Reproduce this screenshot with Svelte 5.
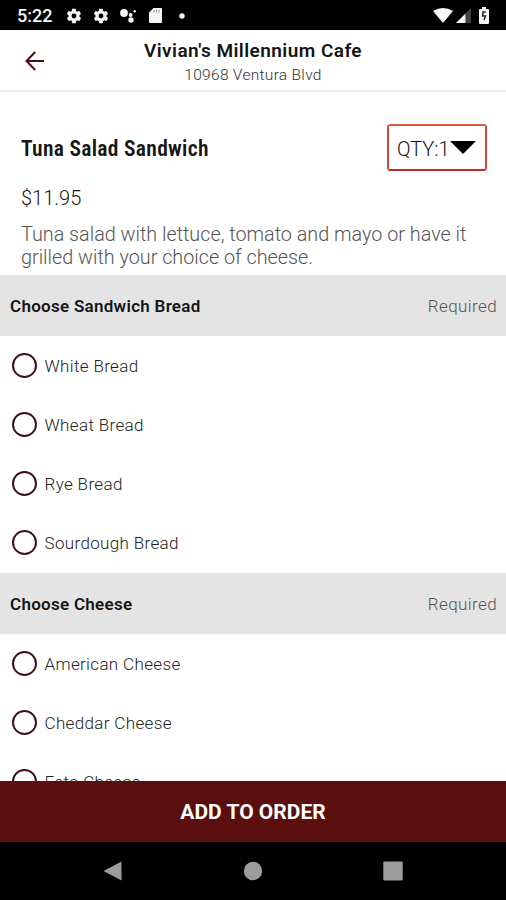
<script lang="ts">
  const item = {
    name: "Tuna Salad Sandwich",
    price: 11.95,
    description: "Tuna salad with lettuce, tomato and mayo or have it grilled with your choice of cheese."
  }

  const groups = [
    { title: "Choose Sandwich Bread", options: ["White Bread", "Wheat Bread", "Rye Bread", "Sourdough Bread"] },
    { title: "Choose Cheese", options: ["American Cheese", "Cheddar Cheese", "Feta Cheese"] }
  ]

  const gear = "M19.4 13c0-.3.1-.6.1-1s0-.7-.1-1l2.1-1.6c.2-.2.2-.4.1-.6l-2-3.5c-.1-.2-.4-.3-.6-.2l-2.5 1c-.5-.4-1.1-.7-1.7-1l-.4-2.6c0-.3-.2-.5-.5-.5h-4c-.2 0-.4.2-.5.4l-.4 2.7c-.6.2-1.1.6-1.7 1l-2.5-1c-.2-.1-.5 0-.6.2l-2 3.5c-.1.2-.1.4.1.6L4.5 11c0 .3-.1.6-.1 1s0 .7.1 1l-2.1 1.6c-.2.2-.2.4-.1.6l2 3.5c.1.2.4.3.6.2l2.5-1c.5.4 1.1.7 1.7 1l.4 2.7c0 .2.2.4.5.4h4c.3 0 .5-.2.5-.4l.4-2.7c.6-.2 1.1-.6 1.7-1l2.5 1c.2.1.5 0 .6-.2l2-3.5c.1-.2.1-.4-.1-.6zM12 15.4a3.4 3.4 0 1 1 0-6.8 3.4 3.4 0 0 1 0 6.8z"

  let selected: Record<string, string> = $state({})
  let quantity = $state(1)
</script>

<div class="phone">
  <div class="status">
    <span class="clock">5:22</span>
    <svg class="gear" viewBox="1 1 22 22"><path d={gear} /></svg>
    <svg class="gear" viewBox="1 1 22 22"><path d={gear} /></svg>
    <svg class="dots" viewBox="0 0 16 14">
      <circle cx="4" cy="4" r="3.9" />
      <circle cx="10.6" cy="6" r="1.9" />
      <circle cx="11" cy="11" r="2.7" />
      <circle cx="14.7" cy="2.2" r="1.2" />
    </svg>
    <svg class="card" viewBox="0 0 13 15">
      <path d="M4.5 0H12q1 0 1 1v13q0 1-1 1H1q-1 0-1-1V4.5z" />
      <path class="slots" d="M5 2v2.7M7.5 2v2.7M10 2v2.7" />
    </svg>
    <svg class="dot" viewBox="0 0 6 6"><circle cx="3" cy="3" r="2.7" /></svg>
    <svg class="wifi" viewBox="0 0 20 15"><path d="M0 3Q10-3 20 3L10 15z" /></svg>
    <svg class="signal" viewBox="0 0 16 16">
      <path class="dim" d="M16 0v16H0z" />
      <path d="M10 6v10H0z" />
    </svg>
    <svg class="battery" viewBox="0 0 10 17">
      <path d="M3 0h4v2h2q1 0 1 1v13q0 1-1 1H1q-1 0-1-1V3q0-1 1-1h2z" />
      <path class="bolt" d="M6.8 5H4L3.6 9H6.4L5 13" />
    </svg>
  </div>

  <header>
    <button class="back" aria-label="Back">
      <svg viewBox="0 0 20 20"><path d="M19 10H2M10.2 1 1.5 10l8.7 9" /></svg>
    </button>
    <h1>Vivian's Millennium Cafe</h1>
    <p>10968 Ventura Blvd</p>
  </header>

  <main>
    <section class="info">
      <div class="top">
        <h2>{item.name}</h2>
        <button class="qty" onclick={() => quantity++}>
          <span>QTY:{quantity}</span>
          <svg viewBox="0 0 26 13"><path d="M0 0h26L13 13z" /></svg>
        </button>
      </div>
      <p class="price">${item.price}</p>
      <p class="description">{item.description}</p>
    </section>

    {#each groups as group}
      <div class="group">
        <h3>{group.title}</h3>
        <span>Required</span>
      </div>
      {#each group.options as option}
        <label class="option">
          <input type="radio" name={group.title} value={option} bind:group={selected[group.title]} />
          <span>{option}</span>
        </label>
      {/each}
    {/each}
  </main>

  <button class="add">ADD TO ORDER</button>

  <nav>
    <svg viewBox="0 0 20 20"><path d="M18.5.5v19L.5 10z" /></svg>
    <svg viewBox="0 0 20 20"><circle cx="10" cy="10" r="9.2" /></svg>
    <svg viewBox="0 0 20 20"><rect x=".3" y=".5" width="19.4" height="19" rx="1" /></svg>
  </nav>
</div>

<style>
  :global(body) {
    background: #fff;
  }

  .phone {
    display: flex;
    flex-direction: column;
    width: 506px;
    height: 900px;
    overflow: hidden;
    background: #fff;
    color: #161616;
    font-family: Roboto, "Liberation Sans", sans-serif;
  }

  h1, h2, h3, p {
    margin: 0;
  }

  button {
    font-family: inherit;
    cursor: pointer;
  }

  svg {
    display: block;
    flex: none;
  }

  .status {
    display: flex;
    align-items: center;
    flex: none;
    height: 30px;
    box-sizing: border-box;
    padding: 1px 17px 0 17px;
    background: #000;
    fill: #f6f6f6;
    color: #f6f6f6;
  }

  .clock {
    width: 49px;
    font-size: 18px;
    font-weight: 500;
    line-height: 30px;
  }

  .gear {
    width: 16px;
    height: 16px;
    margin-right: 11px;
  }

  .dots {
    width: 16px;
    height: 14px;
    margin-right: 13px;
  }

  .card {
    width: 13px;
    height: 15px;
    margin-right: 17px;
  }

  .slots {
    stroke: #999;
    stroke-width: 1;
  }

  .dot {
    width: 6px;
    height: 6px;
  }

  .wifi {
    width: 20px;
    height: 15px;
    margin-left: auto;
    margin-right: 3px;
  }

  .signal {
    width: 15px;
    height: 15px;
    margin-right: 8px;
  }

  .dim {
    fill: #444;
  }

  .battery {
    width: 10px;
    height: 17px;
  }

  .bolt {
    fill: none;
    stroke: #222;
    stroke-width: 1.5;
  }

  header {
    position: relative;
    flex: none;
    height: 62px;
    box-sizing: border-box;
    padding-top: 9px;
    border-bottom: 2px solid #ececec;
    text-align: center;
  }

  h1 {
    font-size: 19px;
    font-weight: 600;
    letter-spacing: 0.44px;
    line-height: 24px;
  }

  header p {
    padding-top: 1px;
    color: #333;
    font-size: 15.5px;
    font-weight: 300;
    letter-spacing: 0.3px;
    line-height: 23px;
  }

  .back {
    position: absolute;
    left: 25px;
    top: 21px;
    padding: 0;
    border: 0;
    background: none;
  }

  .back svg {
    width: 20px;
    height: 20px;
    fill: none;
    stroke: #4a0d14;
    stroke-width: 2;
  }

  main {
    height: 688.5px;
    overflow: hidden;
  }

  .info {
    height: 183px;
    box-sizing: border-box;
    padding: 32px 19px 0 21px;
  }

  .top {
    display: flex;
    align-items: center;
    justify-content: space-between;
    height: 47px;
  }

  h2 {
    font-family: "Roboto Condensed", Roboto, sans-serif;
    font-size: 21.5px;
    font-weight: 650;
    font-stretch: 75%;
    letter-spacing: 0.3px;
    white-space: nowrap;
    padding-top: 1px;
  }

  .qty {
    display: flex;
    align-items: center;
    width: 100px;
    height: 47px;
    box-sizing: border-box;
    padding: 2px 8px 0;
    border: 2px solid;
    border-color: #d75b3c #cf4a3a #bd2a2c;
    border-radius: 3px;
    background: #fff;
    color: #111;
    font-size: 20px;
    font-weight: 300;
  }

  .qty svg {
    width: 26px;
    height: 13px;
    margin-top: -3px;
  }

  .price {
    margin-top: 15px;
    font-size: 20px;
    font-weight: 350;
    line-height: 24px;
  }

  .description {
    margin-top: 13px;
    color: #555;
    font-size: 19.8px;
    font-weight: 330;
    line-height: 23px;
  }

  .group {
    display: flex;
    align-items: center;
    justify-content: space-between;
    height: 61px;
    box-sizing: border-box;
    padding: 1px 9px 0 10px;
    background: #e4e4e4;
    font-size: 17px;
  }

  .option + .group {
    margin-top: 0.6px;
    padding-top: 2px;
  }

  h3 {
    font-size: 17px;
    font-weight: 600;
    letter-spacing: 0.28px;
  }

  .group span {
    color: #555;
    font-weight: 330;
    letter-spacing: 0.4px;
  }

  .option {
    display: flex;
    align-items: center;
    gap: 7.5px;
    height: 59.1px;
    padding-left: 12px;
    color: #222;
    font-size: 17px;
    font-weight: 330;
    letter-spacing: 0.35px;
  }

  .option input {
    appearance: none;
    width: 25px;
    height: 25px;
    margin: 0;
    border: 2px solid #3c1218;
    border-radius: 50%;
  }

  .option input:checked {
    background: radial-gradient(#3c1218 45%, transparent 50%);
  }

  .add {
    flex: none;
    height: 61.5px;
    padding: 2px 0 0;
    border: 0;
    background: #5a0e0e;
    color: #fff;
    font-size: 21px;
    font-weight: 750;
  }

  nav {
    display: flex;
    align-items: center;
    justify-content: space-between;
    flex: 1;
    padding: 0 103px;
    background: #000;
    fill: #9c9c9c;
  }

  nav svg {
    width: 20px;
    height: 20px;
  }
</style>
